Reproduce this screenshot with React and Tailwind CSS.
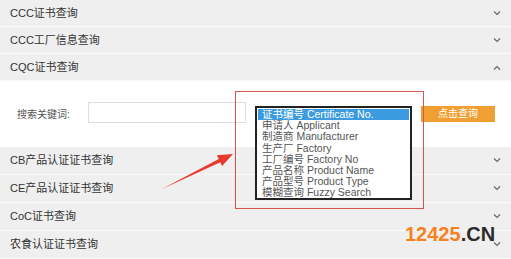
import React from 'react';

const topRows = ['CCC证书查询', 'CCC工厂信息查询'];
const bottomRows = ['CB产品认证证书查询', 'CE产品认证证书查询', 'CoC证书查询', '农食认证证书查询'];
const options = [
    '证书编号 Certificate No.',
    '申请人 Applicant',
    '制造商 Manufacturer',
    '生产厂 Factory',
    '工厂编号 Factory No',
    '产品名称 Product Name',
    '产品型号 Product Type',
    '模糊查询 Fuzzy Search',
];

const font = { fontFamily: '"Liberation Sans", "Noto Sans CJK SC", sans-serif' };

function Chevron({ up }) {
    return (
        <svg width="8" height="5" viewBox="0 0 8 5" className="shrink-0">
            <path d={up ? 'M1 4.5 L4 1.5 L7 4.5' : 'M1 0.5 L4 3.5 L7 0.5'} fill="none" stroke="#666" strokeWidth="1.1" />
        </svg>
    );
}

function Row({ label, up, tall }) {
    return (
        <div className={`flex items-center justify-between bg-[#efefef] border-b border-[#fafafa] pl-[10px] pr-[10px] text-[11px] text-[#333] ${tall ? 'h-[28px]' : 'h-[27px]'}`}>
            <span>{label}</span>
            <Chevron up={up} />
        </div>
    );
}

export default function App() {
    return (
        <div className="relative w-[511px] h-[259px] overflow-hidden bg-white" style={font}>
            {topRows.map((r) => (
                <Row key={r} label={r} />
            ))}
            <Row label="CQC证书查询" up />

            {/* search panel */}
            <div className="flex items-start h-[66px] bg-white pl-[17px]">
                <span className="mt-[26px] w-[71px] text-[10px] text-[#555]">搜索关键词:</span>
                <div className="mt-[21px] w-[158px] h-[21px] border border-[#ddd] bg-white" />
                <div className="relative z-10 mt-[25px] ml-[9px] w-[157px] h-[94px] border-2 border-[#222] bg-white px-[1px] py-[1px] text-[10.5px] leading-[11.2px] text-[#555]">
                    {options.map((o, i) => (
                        <div key={o} className={`pl-[4px] whitespace-nowrap ${i === 0 ? 'bg-[#3c9be0] text-white' : ''}`}>{o}</div>
                    ))}
                </div>
                <button className="mt-[25px] ml-[9px] w-[74px] h-[16px] bg-[#f0a032] text-white text-[10px] leading-[16px]">点击查询</button>
            </div>

            {bottomRows.map((r) => (
                <Row key={r} label={r} tall />
            ))}

            {/* annotation box */}
            <div className="absolute left-[235px] top-[91px] w-[189px] h-[118px] border border-[#d9534f] pointer-events-none" />

            {/* arrow */}
            <svg className="absolute left-0 top-0 pointer-events-none" width="511" height="259">
                <polygon points="162,189 218.7,159 216.9,155.2 233,154 222.1,166 220.3,162.2" fill="#e8392f" />
            </svg>

            {/* watermark */}
            <div className="absolute left-[405px] top-[222px] text-[20px] font-bold leading-[24px]" style={{ fontFamily: '"Liberation Sans", Arial, sans-serif' }}>
                <span className="text-[#f7801f]">12425</span>
                <span className="text-[#2b2b2b]">.CN</span>
            </div>
        </div>
    );
}
